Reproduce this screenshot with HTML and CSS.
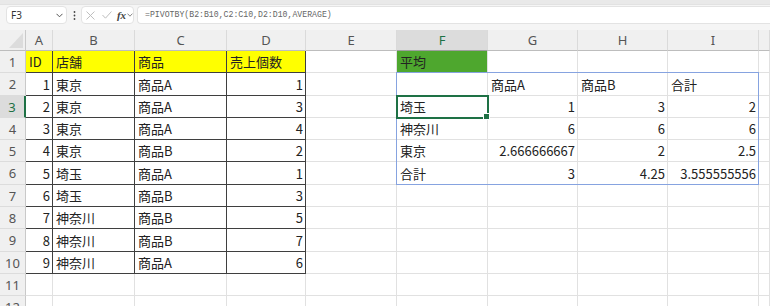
FILE: index.html
```html
<!DOCTYPE html>
<html lang="ja">
<head>
<meta charset="utf-8">
<title>PIVOTBY</title>
<link rel="stylesheet" href="styles.css">
</head>
<body>
<div class="app">
  <div class="edge"></div>
  <div class="fbar">
    <div class="namebox">
      <span>F3</span>
      <svg class="chev" width="7" height="5" viewBox="0 0 7 5"><path d="M0.5 0.8 L3.5 3.8 L6.5 0.8" fill="none" stroke="#555" stroke-width="1"/></svg>
    </div>
    <div class="dots">
      <svg width="3" height="9" viewBox="0 0 3 9"><circle cx="1.5" cy="1" r="0.9" fill="#444"/><circle cx="1.5" cy="4.5" r="0.9" fill="#444"/><circle cx="1.5" cy="8" r="0.9" fill="#444"/></svg>
    </div>
    <div class="fxbox">
      <svg width="9" height="9" viewBox="0 0 9 9"><path d="M0.5 0.5 L8.5 8.5 M8.5 0.5 L0.5 8.5" stroke="#bdbdbd" stroke-width="1" fill="none"/></svg>
      <svg width="10" height="8" viewBox="0 0 10 8"><path d="M0.5 4 L3.5 7.2 L9.5 0.5" stroke="#bdbdbd" stroke-width="1" fill="none"/></svg>
      <span class="fx">fx</span>
      <svg class="chev2" width="6" height="4" viewBox="0 0 6 4"><path d="M0.5 0.6 L3 3.2 L5.5 0.6" fill="none" stroke="#777" stroke-width="0.9"/></svg>
    </div>
    <div class="formula">=PIVOTBY(B2:B10,C2:C10,D2:D10,AVERAGE)</div>
  </div>
  <div class="sheet">
    <!-- header row -->
    <div class="corner"><span class="tri"></span></div>
    <div class="ch">A</div><div class="ch">B</div><div class="ch">C</div><div class="ch">D</div><div class="ch">E</div>
    <div class="ch sel">F</div><div class="ch">G</div><div class="ch">H</div><div class="ch">I</div><div class="ch"></div>

    <!-- row 1 -->
    <div class="rh">1</div>
    <div class="c t y">ID</div><div class="c t y">店舗</div><div class="c t y">商品</div><div class="c t y">売上個数</div>
    <div class="c"></div><div class="c gr">平均</div><div class="c"></div><div class="c"></div><div class="c"></div><div class="c"></div>

    <!-- row 2 -->
    <div class="rh">2</div>
    <div class="c t n">1</div><div class="c t">東京</div><div class="c t">商品A</div><div class="c t n">1</div>
    <div class="c"></div><div class="c"></div><div class="c">商品A</div><div class="c">商品B</div><div class="c">合計</div><div class="c"></div>

    <!-- row 3 -->
    <div class="rh rsel">3</div>
    <div class="c t n">2</div><div class="c t">東京</div><div class="c t">商品A</div><div class="c t n">3</div>
    <div class="c"></div><div class="c act">埼玉</div><div class="c n">1</div><div class="c n">3</div><div class="c n">2</div><div class="c"></div>

    <!-- row 4 -->
    <div class="rh">4</div>
    <div class="c t n">3</div><div class="c t">東京</div><div class="c t">商品A</div><div class="c t n">4</div>
    <div class="c"></div><div class="c">神奈川</div><div class="c n">6</div><div class="c n">6</div><div class="c n">6</div><div class="c"></div>

    <!-- row 5 -->
    <div class="rh">5</div>
    <div class="c t n">4</div><div class="c t">東京</div><div class="c t">商品B</div><div class="c t n">2</div>
    <div class="c"></div><div class="c">東京</div><div class="c n">2.666666667</div><div class="c n">2</div><div class="c n">2.5</div><div class="c"></div>

    <!-- row 6 -->
    <div class="rh">6</div>
    <div class="c t n">5</div><div class="c t">埼玉</div><div class="c t">商品A</div><div class="c t n">1</div>
    <div class="c"></div><div class="c">合計</div><div class="c n">3</div><div class="c n">4.25</div><div class="c n">3.555555556</div><div class="c"></div>

    <!-- row 7 -->
    <div class="rh">7</div>
    <div class="c t n">6</div><div class="c t">埼玉</div><div class="c t">商品B</div><div class="c t n">3</div>
    <div class="c"></div><div class="c"></div><div class="c"></div><div class="c"></div><div class="c"></div><div class="c"></div>

    <!-- row 8 -->
    <div class="rh">8</div>
    <div class="c t n">7</div><div class="c t">神奈川</div><div class="c t">商品B</div><div class="c t n">5</div>
    <div class="c"></div><div class="c"></div><div class="c"></div><div class="c"></div><div class="c"></div><div class="c"></div>

    <!-- row 9 -->
    <div class="rh">9</div>
    <div class="c t n">8</div><div class="c t">神奈川</div><div class="c t">商品B</div><div class="c t n">7</div>
    <div class="c"></div><div class="c"></div><div class="c"></div><div class="c"></div><div class="c"></div><div class="c"></div>

    <!-- row 10 -->
    <div class="rh">10</div>
    <div class="c t n">9</div><div class="c t">神奈川</div><div class="c t">商品A</div><div class="c t n">6</div>
    <div class="c"></div><div class="c"></div><div class="c"></div><div class="c"></div><div class="c"></div><div class="c"></div>

    <!-- row 11 -->
    <div class="rh">11</div>
    <div class="c"></div><div class="c"></div><div class="c"></div><div class="c"></div>
    <div class="c"></div><div class="c"></div><div class="c"></div><div class="c"></div><div class="c"></div><div class="c"></div>

    <!-- row 12 -->
    <div class="rh">12</div>
    <div class="c"></div><div class="c"></div><div class="c"></div><div class="c"></div>
    <div class="c"></div><div class="c"></div><div class="c"></div><div class="c"></div><div class="c"></div><div class="c"></div>

    <div class="spill"></div>
  </div>
</div>
</body>
</html>
```

FILE: styles.css
```css
* { box-sizing: border-box; }
html, body { margin: 0; padding: 0; background: #ffffff; }
body { width: 770px; height: 306px; overflow: hidden; }

.app { width: 770px; height: 306px; overflow: hidden; font-family: "Noto Sans CJK JP", "Noto Sans", sans-serif; }

.edge { height: 5px; background: #e9e9e9; border-bottom: 1px solid #e2e2e2; }

.fbar {
  height: 25px;
  background: #f5f5f5;
  display: flex;
  align-items: flex-start;
  padding: 1px 0 0 6px;
}

.namebox {
  width: 61px; height: 18px;
  background: #fff;
  border: 1px solid #e3e3e3;
  border-radius: 4px;
  display: flex; align-items: center; justify-content: space-between;
  padding: 0 3px 0 3px;
  font: 10px/1 "Noto Sans", sans-serif;
  color: #333;
}
.namebox span { padding-left: 1px; }

.dots { width: 14px; height: 18px; display: flex; align-items: center; justify-content: center; }

.fxbox {
  width: 53px; height: 18px;
  background: #fff;
  border: 1px solid #e3e3e3;
  border-radius: 4px;
  display: flex; align-items: center;
  padding: 0 0 0 4px;
  gap: 7px;
}
.fx {
  font: italic bold 11px/1 "Liberation Serif", serif;
  color: #444;
  margin-left: -2px;
}
.chev2 { margin-left: -6px; }

.formula {
  flex: 1;
  margin-left: 3px;
  height: 18px;
  background: #fff;
  border: 1px solid #e3e3e3;
  border-right: none;
  border-radius: 4px 0 0 4px;
  display: flex; align-items: center;
  padding-left: 7px;
  font: 8.2px/1 "Liberation Mono", monospace;
  color: #666;
}

.sheet {
  position: relative;
  display: grid;
  grid-template-columns: 26px 27px 82px 92px 79px 91px 91px 90px 90px 91px 11px;
  grid-template-rows: 21px 22px 23px 22px 22px 22px 23px 22px 22px 23px 22px 22px 22px;
}

.corner {
  background: #f0f0f0;
  border-right: 1px solid #c9c9c9;
  border-bottom: 1px solid #bdbdbd;
  position: relative;
}
.tri {
  position: absolute; right: 2px; bottom: 2px;
  width: 0; height: 0;
  border-left: 14px solid transparent;
  border-bottom: 15px solid #dcdcdc;
}

.ch {
  background: #f0f0f0;
  border-right: 1px solid #dadada;
  border-bottom: 1px solid #bdbdbd;
  display: flex; align-items: center; justify-content: center;
  font: 13px/1 "Noto Sans", sans-serif;
  color: #555;
  padding-top: 1px;
}
.ch.sel { background: #dcdcdc; color: #1e7145; border-bottom-color: #9e9e9e; }

.rh {
  background: #f0f0f0;
  border-right: 1px solid #c9c9c9;
  border-bottom: 1px solid #dcdcdc;
  display: flex; align-items: center; justify-content: center;
  font: 13px/1 "Noto Sans", sans-serif;
  color: #555;
  padding-top: 1px;
}
.rh.rsel { background: #dcdcdc; color: #1e7145; border-right: 2px solid #1e7145; }

.c {
  border-right: 1px solid #e1e1e1;
  border-bottom: 1px solid #e1e1e1;
  display: flex; align-items: flex-end;
  padding: 0 2px 2px 3px;
  font: 13px/16px "Noto Sans CJK JP", sans-serif;
  color: #222;
  white-space: nowrap;
  overflow: hidden;
}
.c.n { justify-content: flex-end; }
.c.t { border-right-color: #3f3f3f; border-bottom-color: #3f3f3f; }
.c.y { background: #ffff00; }
.c.gr { background: #4ea72e; }

.c.act {
  position: relative;
  overflow: visible;
  outline: 2px solid #1e7145;
  outline-offset: -1px;
  z-index: 3;
}
.c.act::after {
  content: "";
  position: absolute;
  right: -3px; bottom: -3px;
  width: 5px; height: 5px;
  background: #1e7145;
  border: 1px solid #fff;
}

.spill {
  position: absolute;
  grid-column: 7 / 11;
  grid-row: 3 / 8;
  top: -1px; left: -1px; right: 0; bottom: 0;
  border: 1px solid #86a3e0;
  z-index: 2;
  pointer-events: none;
}
```
